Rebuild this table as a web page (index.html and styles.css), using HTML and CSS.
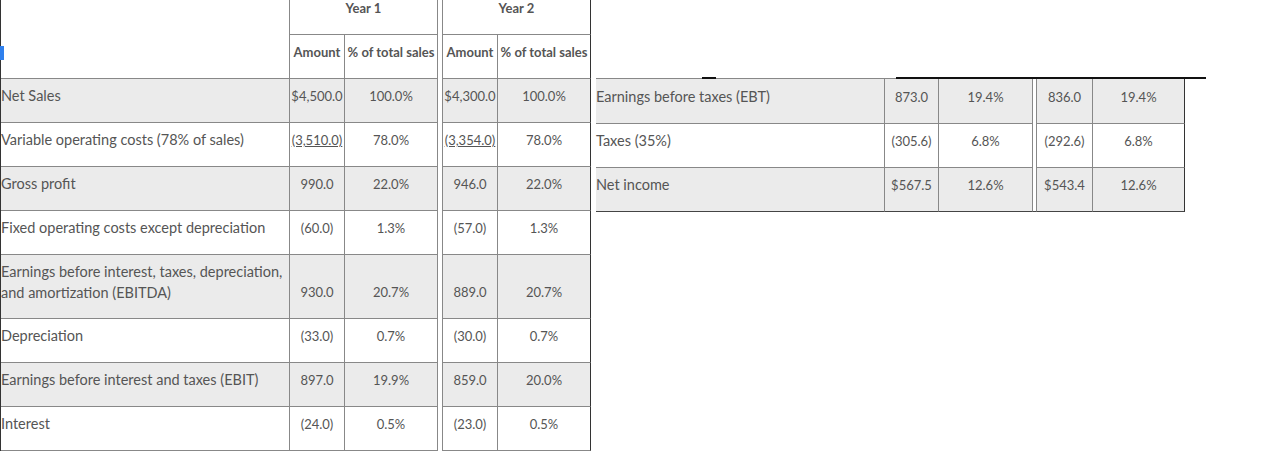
FILE: index.html
```html
<!DOCTYPE html>
<html lang="en">
<head>
<meta charset="utf-8">
<title>Income statement</title>
<link rel="stylesheet" href="styles.css">
</head>
<body>
<div class="page">
  <div class="sheet">
    <span class="caret"></span>
    <div class="grid grid-left">
      <div class="row head1">
        <div class="c blank"></div>
        <div class="c year">Year 1</div>
        <div class="c gap"></div>
        <div class="c year">Year 2</div>
      </div>
      <div class="row head2">
        <div class="c blank"></div>
        <div class="c th amt">Amount</div>
        <div class="c th pct">% of total sales</div>
        <div class="c gap"></div>
        <div class="c th amt">Amount</div>
        <div class="c th pct end">% of total sales</div>
      </div>
      <div class="row shade">
        <div class="c label">Net Sales</div>
        <div class="c num amt">$4,500.0</div>
        <div class="c num pct">100.0%</div>
        <div class="c gap"></div>
        <div class="c num amt">$4,300.0</div>
        <div class="c num pct end">100.0%</div>
      </div>
      <div class="row">
        <div class="c label">Variable operating costs (78% of sales)</div>
        <div class="c num amt"><u>(3,510.0)</u></div>
        <div class="c num pct">78.0%</div>
        <div class="c gap"></div>
        <div class="c num amt"><u>(3,354.0)</u></div>
        <div class="c num pct end">78.0%</div>
      </div>
      <div class="row shade">
        <div class="c label">Gross profit</div>
        <div class="c num amt">990.0</div>
        <div class="c num pct">22.0%</div>
        <div class="c gap"></div>
        <div class="c num amt">946.0</div>
        <div class="c num pct end">22.0%</div>
      </div>
      <div class="row">
        <div class="c label">Fixed operating costs except depreciation</div>
        <div class="c num amt">(60.0)</div>
        <div class="c num pct">1.3%</div>
        <div class="c gap"></div>
        <div class="c num amt">(57.0)</div>
        <div class="c num pct end">1.3%</div>
      </div>
      <div class="row shade">
        <div class="c label">Earnings before interest, taxes, depreciation,<br>and amortization (EBITDA)</div>
        <div class="c num amt">930.0</div>
        <div class="c num pct">20.7%</div>
        <div class="c gap"></div>
        <div class="c num amt">889.0</div>
        <div class="c num pct end">20.7%</div>
      </div>
      <div class="row">
        <div class="c label">Depreciation</div>
        <div class="c num amt">(33.0)</div>
        <div class="c num pct">0.7%</div>
        <div class="c gap"></div>
        <div class="c num amt">(30.0)</div>
        <div class="c num pct end">0.7%</div>
      </div>
      <div class="row shade">
        <div class="c label">Earnings before interest and taxes (EBIT)</div>
        <div class="c num amt">897.0</div>
        <div class="c num pct">19.9%</div>
        <div class="c gap"></div>
        <div class="c num amt">859.0</div>
        <div class="c num pct end">20.0%</div>
      </div>
      <div class="row last">
        <div class="c label">Interest</div>
        <div class="c num amt">(24.0)</div>
        <div class="c num pct">0.5%</div>
        <div class="c gap"></div>
        <div class="c num amt">(23.0)</div>
        <div class="c num pct end">0.5%</div>
      </div>
    </div>
  </div>

  <div class="side">
    <div class="rule">
      <span class="ink ink-a"></span>
      <span class="ink ink-b"></span>
    </div>
    <div class="grid grid-right">
      <div class="row shade first">
        <div class="c label">Earnings before taxes (EBT)</div>
        <div class="c num amt">873.0</div>
        <div class="c num pct">19.4%</div>
        <div class="c gap"></div>
        <div class="c num amt">836.0</div>
        <div class="c num pct end">19.4%</div>
      </div>
      <div class="row">
        <div class="c label">Taxes (35%)</div>
        <div class="c num amt">(305.6)</div>
        <div class="c num pct">6.8%</div>
        <div class="c gap"></div>
        <div class="c num amt">(292.6)</div>
        <div class="c num pct end">6.8%</div>
      </div>
      <div class="row shade last">
        <div class="c label">Net income</div>
        <div class="c num amt">$567.5</div>
        <div class="c num pct">12.6%</div>
        <div class="c gap"></div>
        <div class="c num amt">$543.4</div>
        <div class="c num pct end">12.6%</div>
      </div>
    </div>
  </div>
</div>
</body>
</html>
```

FILE: styles.css
```css
* { box-sizing: border-box; }

html, body {
  margin: 0;
  padding: 0;
  background: #ffffff;
}

body {
  font-family: Lato, "Liberation Sans", sans-serif;
  font-size: 13px;
  color: #555555;
}

.page {
  display: flex;
  align-items: flex-start;
}

.sheet {
  position: relative;
  border-left: 1px solid #333333;
}

.caret {
  position: absolute;
  left: -1px;
  top: 46px;
  width: 4px;
  height: 14px;
  background: #2f80ed;
}

.grid {
  display: grid;
}

.grid-left {
  grid-template-columns: 288px 55px 94px 4px 55px 94px;
  grid-template-rows: 34px 44px 44px 44px 44px 44px 64px 44px 44px 45px;
}

.row { display: contents; }

.c {
  display: flex;
  align-items: flex-end;
  padding: 0 0 16px 0;
  line-height: 20px;
  border-top: 1px solid #888888;
  white-space: nowrap;
}

.c.label {
  display: block;
  align-self: stretch;
  padding-top: 6px;
  padding-bottom: 0;
  font-size: 14.5px;
  line-height: 21px;
  white-space: normal;
}

.c.num,
.c.th,
.c.year { justify-content: center; }

.c.amt { border-left: 1px solid #888888; }
.c.pct { border-left: 1px solid #888888; border-right: 1px solid #888888; }
.c.pct.end { border-right-color: #333333; }

.c.gap { border: none; background: #ffffff; }
.c.blank { border: none; }

.head1 .c { border-top: none; }
.head1 .year {
  grid-column: span 2;
  font-weight: 700;
  border-left: 1px solid #888888;
  border-right: 1px solid #888888;
}
.head1 .year:last-child { border-right-color: #333333; }

.th { font-weight: 700; }

.shade .c { background: #ebebeb; }
.shade .c.gap { background: #ffffff; }

.last .c { border-bottom: 1px solid #888888; }
.last .c.gap { border-bottom: none; }

.num u { text-decoration: underline; }

/* right-hand block */
.side {
  margin-left: 5px;
  margin-top: 78px;
}

.rule {
  position: relative;
  width: 610px;
  height: 1px;
  background: #888888;
}

.ink {
  position: absolute;
  top: -1px;
  height: 2px;
  background: #111111;
}

.ink-a { left: 106px; width: 14px; }
.ink-b { left: 300px; width: 310px; }

.grid-right {
  grid-template-columns: 288px 54px 95px 3px 56px 93px;
  grid-template-rows: 44px 44px 45px;
}

.grid-right .first .c { border-top: none; }
.grid-right .first .c.label { padding-top: 7px; }
.grid-right .last .c { border-bottom-color: #444444; }
.grid-right .last .c.gap { border-bottom: 1px solid #444444; }
```
